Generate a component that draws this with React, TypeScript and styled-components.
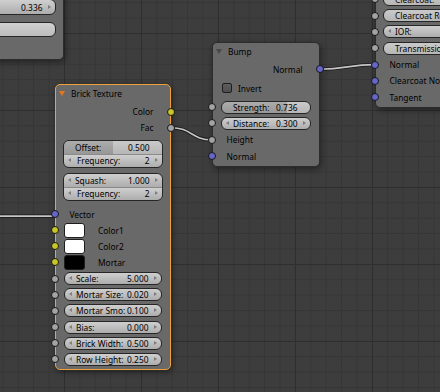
import React from "react";
import styled, { createGlobalStyle, css } from "styled-components";

const Global = createGlobalStyle`
  html, body { margin: 0; padding: 0; background: #3d3d3d; }
  body {
    font-family: "Noto Sans", "DejaVu Sans", sans-serif;
    font-size: 8.4px;
    color: #000;
  }
`;

const Canvas = styled.div`
  position: relative;
  width: 440px;
  height: 392px;
  overflow: hidden;
  background-color: #3d3d3d;
  background-image:
    linear-gradient(to right, #2f2f2f 1px, transparent 1px),
    linear-gradient(to bottom, #2f2f2f 1px, transparent 1px),
    linear-gradient(to right, #363636 1px, transparent 1px),
    linear-gradient(to bottom, #363636 1px, transparent 1px);
  background-size: 77px 77px, 77px 77px, 15.4px 15.4px, 15.4px 15.4px;
  background-position: 64px 33px;
`;

const Wires = styled.svg`
  position: absolute;
  left: 0;
  top: 0;
  z-index: 0;
`;

const Node = styled.div<{ $x: number; $y: number; $w: number; $selected?: boolean; $pt?: number; $pb?: number }>`
  position: absolute;
  left: ${(p) => p.$x}px;
  top: ${(p) => p.$y}px;
  width: ${(p) => p.$w}px;
  box-sizing: border-box;
  display: flex;
  flex-direction: column;
  padding: ${(p) => p.$pt ?? 0}px 0 ${(p) => p.$pb ?? 0}px;
  background: #696969;
  border: 1px solid ${(p) => (p.$selected ? "#f0a03a" : "#2c2c2c")};
  border-radius: 5px;
  box-shadow: 1px 2px 6px rgba(0, 0, 0, 0.45);
  z-index: 1;
`;

const Header = styled.div`
  flex: none;
  height: 16px;
  display: flex;
  align-items: center;
  padding-left: 3px;
  gap: 6px;
`;

const Collapse = styled.span<{ $color: string }>`
  width: 0;
  height: 0;
  border-style: solid;
  border-width: 5px 3.5px 0 3.5px;
  border-color: ${(p) => p.$color} transparent transparent transparent;
`;

const Title = styled.span`
  color: #000;
  white-space: nowrap;
`;

const RowBase = css<{ $h?: number; $mt?: number }>`
  position: relative;
  flex: none;
  display: flex;
  align-items: center;
  height: ${(p) => p.$h ?? 16}px;
  margin-top: ${(p) => p.$mt ?? 0}px;
  white-space: nowrap;
`;

const OutRow = styled.div<{ $h?: number; $mt?: number }>`
  ${RowBase};
  justify-content: flex-end;
  padding-right: 16.5px;
`;

const InRow = styled.div<{ $h?: number; $mt?: number }>`
  ${RowBase};
  padding-left: 13.5px;
`;

const FieldRow = styled.div<{ $h?: number; $mt?: number; $ml?: number; $mr?: number }>`
  ${RowBase};
  padding: 0 ${(p) => p.$mr ?? 8}px 0 ${(p) => p.$ml ?? 8}px;
`;

const CheckRow = styled.div<{ $h?: number; $mt?: number }>`
  ${RowBase};
  padding-left: 9px;
  gap: 6px;
`;

const ColorRow = styled.div<{ $h?: number; $mt?: number }>`
  ${RowBase};
  padding-left: 8px;
  gap: 13px;
`;

const sockColors = { yellow: "#c7c729", gray: "#a3a3a3", blue: "#6565ca" };
type SockKind = keyof typeof sockColors;

const Socket = styled.span<{ $kind: SockKind; $side: "left" | "right" }>`
  position: absolute;
  top: 50%;
  ${(p) => p.$side}: -5px;
  width: 8px;
  height: 8px;
  margin-top: -4px;
  box-sizing: border-box;
  border-radius: 50%;
  border: 1px solid #161616;
  background: ${(p) => sockColors[p.$kind]};
  z-index: 2;
`;

const arrows = css`
  &::before,
  &::after {
    content: "";
    position: absolute;
    top: 50%;
    margin-top: -2.5px;
    border-style: solid;
  }
  &::before {
    left: 4px;
    border-width: 2.5px 3px 2.5px 0;
    border-color: transparent #7e7e7e transparent transparent;
  }
  &::after {
    right: 4px;
    border-width: 2.5px 0 2.5px 3px;
    border-color: transparent transparent transparent #7e7e7e;
  }
`;

const shade = "linear-gradient(to bottom, rgba(255,255,255,0.10), rgba(0,0,0,0.07))";

const Field = styled.div<{ $arrows?: boolean; $fill?: number; $cell?: boolean; $h?: number; $plain?: boolean; $end?: boolean }>`
  position: relative;
  width: 100%;
  height: ${(p) => p.$h ?? 13}px;
  box-sizing: border-box;
  display: flex;
  align-items: center;
  justify-content: ${(p) => (p.$end ? "flex-end" : "space-between")};
  padding: 0 12.5px 0 11px;
  white-space: nowrap;
  overflow: hidden;
  color: #000;
  border: ${(p) => (p.$cell ? "none" : "1px solid #262626")};
  border-radius: ${(p) => (p.$cell ? 0 : 6)}px;
  background: ${(p) =>
    p.$plain
      ? "linear-gradient(to bottom, #d0d0d0, #bcbcbc)"
      : p.$fill !== undefined
      ? `${shade}, linear-gradient(to right, #a3a3a3 ${p.$fill}%, #c4c4c4 ${p.$fill}%)`
      : "linear-gradient(to bottom, #cfcfcf, #adadad)"};
  ${(p) => p.$arrows && arrows};
`;

const FieldLabel = styled.span<{ $indent?: number }>`
  padding-left: ${(p) => p.$indent ?? 0}px;
`;

const FieldGroup = styled.div<{ $mt: number }>`
  flex: none;
  display: flex;
  flex-direction: column;
  margin: ${(p) => p.$mt}px 7px 0;
  border: 1px solid #262626;
  border-radius: 6px;
  overflow: hidden;
  & > * + * {
    border-top: 1px solid #8a8a8a;
  }
`;

const Check = styled.span`
  width: 10px;
  height: 10px;
  box-sizing: border-box;
  border: 1px solid #1e1e1e;
  border-radius: 2px;
  background: linear-gradient(to bottom, #5e5e5e, #4e4e4e);
`;

const Swatch = styled.span<{ $color: string }>`
  width: 21px;
  height: 15px;
  box-sizing: border-box;
  border: 1px solid #1e1e1e;
  border-radius: 3px;
  background: ${(p) => p.$color};
`;

type FieldSpec = { label: string; value: string; sock: SockKind; fill?: number; arrows?: boolean };

const brickFields: FieldSpec[] = [
  { label: "Scale:", value: "5.000", sock: "gray", arrows: true },
  { label: "Mortar Size:", value: "0.020", sock: "gray", arrows: true },
  { label: "Mortar Smo:", value: "0.100", sock: "gray", arrows: true },
  { label: "Bias:", value: "0.000", sock: "gray", arrows: true },
  { label: "Brick Width:", value: "0.500", sock: "gray", arrows: true },
  { label: "Row Height:", value: "0.250", sock: "gray", arrows: true },
];

const principled: { label: string; value?: string; sock: SockKind; kind: "slider" | "num" | "label" }[] = [
  { label: "Clearcoat:", value: "0.000", sock: "gray", kind: "slider" },
  { label: "Clearcoat Roughness:", value: "0.030", sock: "gray", kind: "slider" },
  { label: "IOR:", value: "1.450", sock: "gray", kind: "num" },
  { label: "Transmission:", value: "0.000", sock: "gray", kind: "slider" },
  { label: "Normal", sock: "blue", kind: "label" },
  { label: "Clearcoat Normal", sock: "blue", kind: "label" },
  { label: "Tangent", sock: "blue", kind: "label" },
];

const Wire = ({ d }: { d: string }) => (
  <>
    <path d={d} stroke="#1b1b1b" strokeWidth={3.4} fill="none" />
    <path d={d} stroke="#c6c6c6" strokeWidth={1.6} fill="none" />
  </>
);

export default function App() {
  const R = 16.15;
  return (
    <>
      <Global />
      <Canvas>
        <Wires width={440} height={392} viewBox="0 0 440 392">
          <Wire d="M -5 216.1 L 55 216.1" />
          <Wire d="M 171 127.7 C 192 127.7, 191 139.8, 212 139.8" />
          <Wire d="M 320 69.2 C 346 69.2, 349 64.6, 375 64.6" />
        </Wires>

        {/* partial node, top left */}
        <Node $x={-80} $y={-30} $w={144} $pt={28} $pb={22}>
          <FieldRow $h={16} $ml={7} $mr={7}>
            <Field $h={16} $arrows $end>
              <span>0.336</span>
            </Field>
          </FieldRow>
          <FieldRow $h={15} $mt={7} $ml={7} $mr={7}>
            <Field $h={15} $plain />
          </FieldRow>
        </Node>

        {/* Bump */}
        <Node $x={212} $y={42} $w={108} $pb={1.8}>
          <Header>
            <Collapse $color="#484848" />
            <Title>Bump</Title>
          </Header>
          <OutRow $h={16.3} $mt={2}>
            Normal
            <Socket $kind="blue" $side="right" />
          </OutRow>
          <CheckRow $h={16.3} $mt={2.7}>
            <Check />
            <span>Invert</span>
          </CheckRow>
          <FieldRow $h={16.3} $mt={2.7}>
            <Socket $kind="gray" $side="left" />
            <Field $fill={73.6}>
              <span>Strength:</span>
              <span>0.736</span>
            </Field>
          </FieldRow>
          <FieldRow $h={16.3}>
            <Socket $kind="gray" $side="left" />
            <Field $arrows>
              <span>Distance:</span>
              <span>0.300</span>
            </Field>
          </FieldRow>
          <InRow $h={16.3}>
            <Socket $kind="gray" $side="left" />
            Height
          </InRow>
          <InRow $h={16.3}>
            <Socket $kind="blue" $side="left" />
            Normal
          </InRow>
        </Node>

        {/* Principled BSDF (partial) */}
        <Node $x={375} $y={-12} $w={150} $pt={2.25} $pb={2}>
          {principled.map((r) =>
            r.kind === "label" ? (
              <InRow key={r.label} $h={16.3}>
                <Socket $kind={r.sock} $side="left" />
                {r.label}
              </InRow>
            ) : (
              <FieldRow key={r.label} $h={16.3} $ml={7}>
                <Socket $kind={r.sock} $side="left" />
                <Field $fill={r.kind === "slider" ? 0 : undefined} $arrows={r.kind === "num"}>
                  <span>{r.label}</span>
                  <span>{r.value}</span>
                </Field>
              </FieldRow>
            )
          )}
        </Node>

        {/* Brick Texture */}
        <Node $x={55} $y={84} $w={116} $selected $pb={1.2}>
          <Header>
            <Collapse $color="#e8761e" />
            <Title>Brick Texture</Title>
          </Header>
          <OutRow $h={16} $mt={2.7}>
            Color
            <Socket $kind="yellow" $side="right" />
          </OutRow>
          <OutRow $h={16}>
            Fac
            <Socket $kind="gray" $side="right" />
          </OutRow>
          <FieldGroup $mt={4.3}>
            <Field $cell $h={12.8} $fill={50}>
              <span>Offset:</span>
              <span>0.500</span>
            </Field>
            <Field $cell $h={12.8} $arrows>
              <FieldLabel $indent={2}>Frequency:</FieldLabel>
              <span>2</span>
            </Field>
          </FieldGroup>
          <FieldGroup $mt={5.7}>
            <Field $cell $h={12.8} $arrows>
              <span>Squash:</span>
              <span>1.000</span>
            </Field>
            <Field $cell $h={12.8} $arrows>
              <FieldLabel $indent={2}>Frequency:</FieldLabel>
              <span>2</span>
            </Field>
          </FieldGroup>
          <InRow $h={R} $mt={5.1}>
            <Socket $kind="blue" $side="left" />
            Vector
          </InRow>
          <ColorRow $h={R}>
            <Socket $kind="yellow" $side="left" />
            <Swatch $color="#ffffff" />
            <span>Color1</span>
          </ColorRow>
          <ColorRow $h={R}>
            <Socket $kind="yellow" $side="left" />
            <Swatch $color="#ffffff" />
            <span>Color2</span>
          </ColorRow>
          <ColorRow $h={R}>
            <Socket $kind="yellow" $side="left" />
            <Swatch $color="#000000" />
            <span>Mortar</span>
          </ColorRow>
          {brickFields.map((f) => (
            <FieldRow key={f.label} $h={R}>
              <Socket $kind={f.sock} $side="left" />
              <Field $arrows={f.arrows} $fill={f.fill}>
                <span>{f.label}</span>
                <span>{f.value}</span>
              </Field>
            </FieldRow>
          ))}
        </Node>
      </Canvas>
    </>
  );
}
